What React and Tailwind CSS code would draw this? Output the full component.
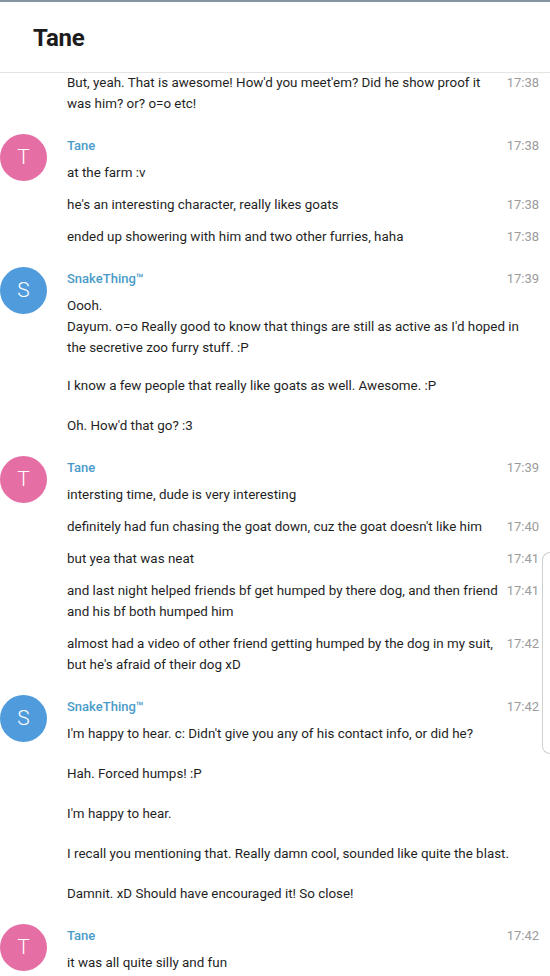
import React from "react";

const NAME = "text-[#4a9bc9]";

function Avatar({ letter, color }) {
  return (
    <div
      className={`w-[47px] h-[47px] rounded-full flex items-center justify-center text-white text-[21px] font-light ${color} -mt-[2px]`}
    >
      {letter}
    </div>
  );
}

function Row({ text, time }) {
  return (
    <div className="flex items-start py-[5.5px]">
      <div className="flex-1 text-[13.4px] leading-[21px] text-[#1f1f1f]">{text}</div>
      {time && (
        <div className="ml-[2px] text-[13px] leading-[21px] text-[#9b9b9b] shrink-0">{time}</div>
      )}
    </div>
  );
}

function Paras({ paras }) {
  return (
    <div className="py-[5.5px] text-[13.4px] leading-[21px] text-[#1f1f1f]">
      {paras.map((p, i) => (
        <div key={i} className={i === 0 ? "" : p.mt}>
          {p.lines.map((l, j) => (
            <div key={j}>{l}</div>
          ))}
        </div>
      ))}
    </div>
  );
}

function Group({ name, letter, color, time, children }) {
  return (
    <div className="flex pt-[17px]">
      <div className="w-[67px] shrink-0">
        <Avatar letter={letter} color={color} />
      </div>
      <div className="flex-1 pr-[11px]">
        <div className="flex justify-between text-[13px] leading-[20px]">
          <span className={`${NAME} font-medium`}>{name}</span>
          <span className="text-[#9b9b9b]">{time}</span>
        </div>
        {children}
      </div>
    </div>
  );
}

const PINK = "bg-[#e56ea5]";
const BLUE = "bg-[#4f9bdb]";

export default function App() {
  return (
    <div
      className="relative w-[550px] h-[976px] overflow-hidden bg-white"
      style={{ fontFamily: "Roboto, 'Noto Sans', sans-serif" }}
    >
      <div className="h-[73px] border-t-2 border-[#8595a2] border-b border-b-[#e4e4e4] flex items-center pl-[33px]">
        <span className="mt-[2px] text-[24px] font-bold text-[#1c1c1c] tracking-[-0.2px]">Tane</span>
      </div>

      <div className="-mt-[7px]">
        <div className="flex pl-[67px] pr-[11px]">
          <div className="flex-1">
            <Row
              text="But, yeah. That is awesome! How'd you meet'em? Did he show proof it was him? or? o=o etc!"
              time="17:38"
            />
          </div>
        </div>

        <Group name="Tane" letter="T" color={PINK} time="17:38">
          <Row text="at the farm :v" />
          <Row text="he's an interesting character, really likes goats" time="17:38" />
          <Row text="ended up showering with him and two other furries, haha" time="17:38" />
        </Group>

        <Group name="SnakeThing™" letter="S" color={BLUE} time="17:39">
          <Paras
            paras={[
              {
                lines: [
                  "Oooh.",
                  "Dayum. o=o Really good to know that things are still as active as I'd hoped in",
                  "the secretive zoo furry stuff. :P",
                ],
              },
              { mt: "mt-[17px]", lines: ["I know a few people that really like goats as well. Awesome. :P"] },
              { mt: "mt-[19px]", lines: ["Oh. How'd that go? :3"] },
            ]}
          />
        </Group>

        <Group name="Tane" letter="T" color={PINK} time="17:39">
          <Row text="intersting time, dude is very interesting" />
          <Row text="definitely had fun chasing the goat down, cuz the goat doesn't like him" time="17:40" />
          <Row text="but yea that was neat" time="17:41" />
          <Row
            text="and last night helped friends bf get humped by there dog, and then friend and his bf both humped him"
            time="17:41"
          />
          <Row
            text="almost had a video of other friend getting humped by the dog in my suit, but he's afraid of their dog xD"
            time="17:42"
          />
        </Group>

        <Group name="SnakeThing™" letter="S" color={BLUE} time="17:42">
          <Paras
            paras={[
              { lines: ["I'm happy to hear. c: Didn't give you any of his contact info, or did he?"] },
              { mt: "mt-[19px]", lines: ["Hah. Forced humps! :P"] },
              { mt: "mt-[19px]", lines: ["I'm happy to hear."] },
              { mt: "mt-[19px]", lines: ["I recall you mentioning that. Really damn cool, sounded like quite the blast."] },
              { mt: "mt-[19px]", lines: ["Damnit. xD Should have encouraged it! So close!"] },
            ]}
          />
        </Group>

        <Group name="Tane" letter="T" color={PINK} time="17:42">
          <Row text="it was all quite silly and fun" />
        </Group>
      </div>

      <div className="absolute right-0 top-[552px] h-[202px] w-[8px] border border-r-0 border-[#cfcfcf] rounded-l-[9px]" />
    </div>
  );
}
